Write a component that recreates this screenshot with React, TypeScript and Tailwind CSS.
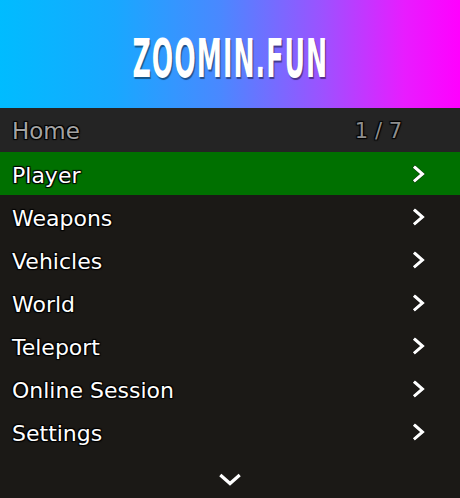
import React from "react";

const items = ["Player", "Weapons", "Vehicles", "World", "Teleport", "Online Session", "Settings"];

const shadow = "[text-shadow:1px_1px_1px_#000,-1px_-1px_1px_#000,1px_-1px_1px_#000,-1px_1px_1px_#000]";

function ChevronRight() {
  return (
    <svg width="14" height="20" viewBox="0 0 14 20" className="block">
      <polyline points="3,3.5 10.5,10 3,16.5" fill="none" stroke="#000" strokeOpacity="0.5" strokeWidth="4" strokeLinecap="square" />
      <polyline points="3,3.5 10.5,10 3,16.5" fill="none" stroke="#fff" strokeWidth="3" strokeLinecap="square" />
    </svg>
  );
}

function ChevronDown() {
  return (
    <svg width="24" height="14" viewBox="0 0 24 14" className="block">
      <polyline points="3.5,3 12,10.5 20.5,3" fill="none" stroke="#fff" strokeWidth="3.2" strokeLinecap="square" />
    </svg>
  );
}

export default function App() {
  return (
    <div className="w-[460px] h-[498px] flex flex-col bg-[#1b1916] font-['DejaVu_Sans',sans-serif] overflow-hidden">
      <div className="h-[108px] flex items-center justify-center bg-[linear-gradient(90deg,#00bcff_0%,#18a8ff_25%,#4a88ff_48%,#9c52ff_70%,#e81cff_88%,#ff00ff_100%)]">
        <div className="text-white font-['DejaVu_Sans_Condensed',sans-serif] font-bold text-[54px] leading-none scale-x-[0.52] tracking-[2px] [text-shadow:2px_2px_1px_rgba(0,0,0,0.45)] pt-[10px] whitespace-nowrap">
          ZOOMIN.FUN
        </div>
      </div>
      <div className="h-[44px] flex items-center justify-between bg-[#242424] pl-[12px] pr-[58px] pt-[3px]">
        <span className={`text-[23px] text-[#a3a3a3] ${shadow}`}>Home</span>
        <span className={`text-[21px] text-[#8e8e8e] ${shadow}`}>1 / 7</span>
      </div>
      {items.map((label, i) => (
        <div
          key={label}
          className={`h-[43.14px] flex items-center justify-between pl-[12px] pr-[34px] ${i === 0 ? "bg-[#007000]" : ""}`}
        >
          <span className={`text-[22px] text-white pt-[3px] ${shadow}`}>{label}</span>
          <ChevronRight />
        </div>
      ))}
      <div className="flex-1 flex items-center justify-center pt-[8px]">
        <ChevronDown />
      </div>
    </div>
  );
}
